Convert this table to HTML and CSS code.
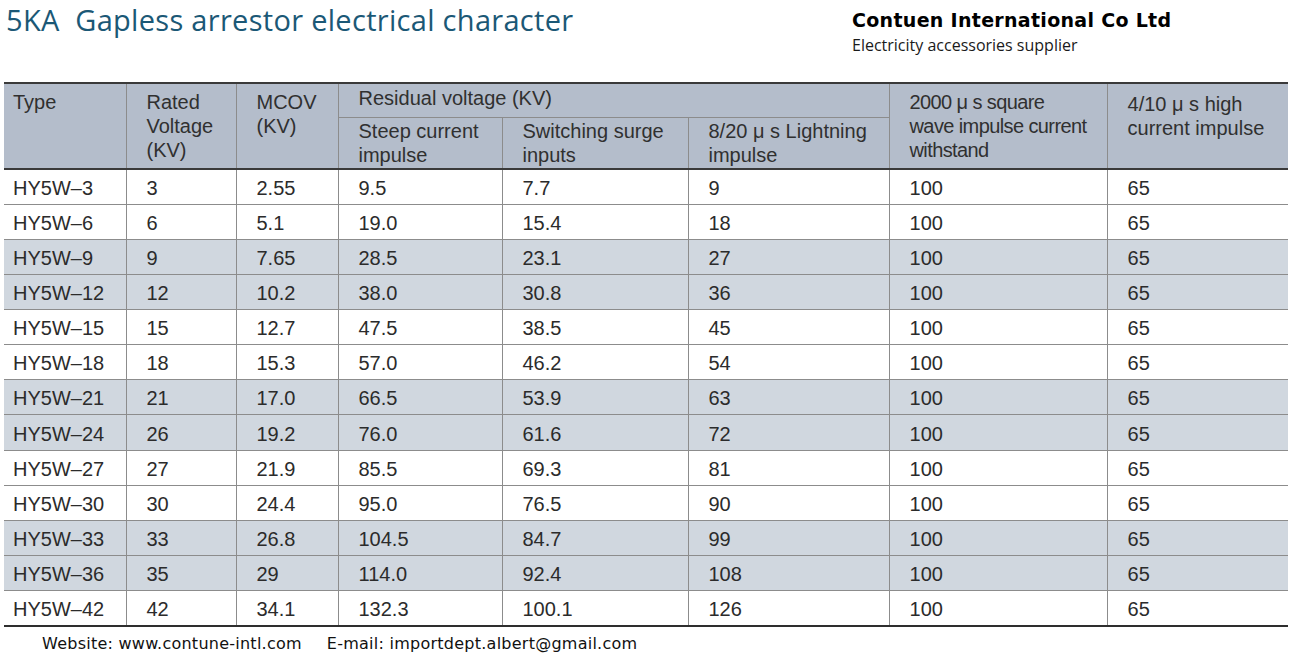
FILE: index.html
```html
<!DOCTYPE html>
<html lang="en">
<head>
<meta charset="utf-8">
<title>5KA Gapless arrestor electrical character</title>
<link rel="stylesheet" href="styles.css">
</head>
<body>
<div class="page">
  <header class="top">
    <h1 class="title">5KA&nbsp; Gapless arrestor electrical character</h1>
    <div class="company">
      <div class="company-name">Contuen International Co Ltd</div>
      <div class="company-tag">Electricity accessories supplier</div>
    </div>
  </header>

  <table class="spec">
    <colgroup>
      <col class="c1"><col class="c2"><col class="c3"><col class="c4">
      <col class="c5"><col class="c6"><col class="c7"><col class="c8">
    </colgroup>
    <thead>
      <tr class="h1">
        <th rowspan="2" class="first hl">Type</th>
        <th rowspan="2" class="hl">Rated<br>Voltage<br>(KV)</th>
        <th rowspan="2" class="hl">MCOV<br>(KV)</th>
        <th colspan="3" class="group">Residual voltage (KV)</th>
        <th rowspan="2" class="hl tight">2000 μ s square<br>wave impulse current<br>withstand</th>
        <th rowspan="2" class="last hl hl2">4/10 μ s high<br>current impulse</th>
      </tr>
      <tr class="h2">
        <th class="sub">Steep current<br>impulse</th>
        <th class="sub">Switching surge<br>inputs</th>
        <th class="sub">8/20 μ s Lightning<br>impulse</th>
      </tr>
    </thead>
    <tbody>
      <tr><td class="first">HY5W–3</td><td>3</td><td>2.55</td><td>9.5</td><td>7.7</td><td>9</td><td>100</td><td class="last">65</td></tr>
      <tr><td class="first">HY5W–6</td><td>6</td><td>5.1</td><td>19.0</td><td>15.4</td><td>18</td><td>100</td><td class="last">65</td></tr>
      <tr class="shade"><td class="first">HY5W–9</td><td>9</td><td>7.65</td><td>28.5</td><td>23.1</td><td>27</td><td>100</td><td class="last">65</td></tr>
      <tr class="shade"><td class="first">HY5W–12</td><td>12</td><td>10.2</td><td>38.0</td><td>30.8</td><td>36</td><td>100</td><td class="last">65</td></tr>
      <tr><td class="first">HY5W–15</td><td>15</td><td>12.7</td><td>47.5</td><td>38.5</td><td>45</td><td>100</td><td class="last">65</td></tr>
      <tr><td class="first">HY5W–18</td><td>18</td><td>15.3</td><td>57.0</td><td>46.2</td><td>54</td><td>100</td><td class="last">65</td></tr>
      <tr class="shade"><td class="first">HY5W–21</td><td>21</td><td>17.0</td><td>66.5</td><td>53.9</td><td>63</td><td>100</td><td class="last">65</td></tr>
      <tr class="shade"><td class="first">HY5W–24</td><td>26</td><td>19.2</td><td>76.0</td><td>61.6</td><td>72</td><td>100</td><td class="last">65</td></tr>
      <tr><td class="first">HY5W–27</td><td>27</td><td>21.9</td><td>85.5</td><td>69.3</td><td>81</td><td>100</td><td class="last">65</td></tr>
      <tr><td class="first">HY5W–30</td><td>30</td><td>24.4</td><td>95.0</td><td>76.5</td><td>90</td><td>100</td><td class="last">65</td></tr>
      <tr class="shade"><td class="first">HY5W–33</td><td>33</td><td>26.8</td><td>104.5</td><td>84.7</td><td>99</td><td>100</td><td class="last">65</td></tr>
      <tr class="shade"><td class="first">HY5W–36</td><td>35</td><td>29</td><td>114.0</td><td>92.4</td><td>108</td><td>100</td><td class="last">65</td></tr>
      <tr class="end"><td class="first">HY5W–42</td><td>42</td><td>34.1</td><td>132.3</td><td>100.1</td><td>126</td><td>100</td><td class="last">65</td></tr>
    </tbody>
  </table>

  <footer class="contact">
    <span>Website: www.contune-intl.com</span>
    <span>E-mail: importdept.albert@gmail.com</span>
  </footer>
</div>
</body>
</html>
```

FILE: styles.css
```css
html, body {
  margin: 0;
  padding: 0;
  background: #ffffff;
}

.page {
  width: 1296px;
}

/* ---------- top heading ---------- */
.top {
  display: grid;
  grid-template-columns: 852px 1fr;
  height: 82px;
}

.title {
  margin: 2px 0 0 6px;
  font-family: "Open Sans", "Noto Sans", sans-serif;
  font-weight: 400;
  font-size: 29px;
  line-height: 36px;
  letter-spacing: 0.3px;
  color: #1b5876;
  white-space: nowrap;
}

.company-name {
  margin-top: 9px;
  font-family: "DejaVu Sans", "Liberation Sans", sans-serif;
  font-weight: 700;
  font-size: 19px;
  line-height: 22px;
  letter-spacing: 0.3px;
  color: #000000;
}

.company-tag {
  margin-top: 4px;
  font-family: "Open Sans", "Noto Sans", sans-serif;
  font-size: 16px;
  line-height: 20px;
  color: #1a1a1a;
}

/* ---------- table ---------- */
.spec {
  margin-left: 4px;
  width: 1284px;
  table-layout: fixed;
  border-collapse: collapse;
  font-family: "Liberation Sans", Arial, sans-serif;
  font-size: 20px;
  line-height: 24px;
  color: #2b2b2b;
}

.c1 { width: 122px; }
.c2 { width: 110px; }
.c3 { width: 102px; }
.c4 { width: 164px; }
.c5 { width: 186px; }
.c6 { width: 201px; }
.c7 { width: 218px; }
.c8 { width: 181px; }

.spec th,
.spec td {
  border-left: 1px solid #8c8c8c;
  border-right: 1px solid #8c8c8c;
  padding: 0 0 0 20px;
  text-align: left;
  white-space: nowrap;
}

.spec .first {
  border-left: none;
  padding-left: 9px;
}

.spec .last {
  border-right: none;
}

.spec thead {
  background: #b4bdcb;
}

.spec th {
  font-weight: 400;
  vertical-align: top;
  color: #303030;
}

.spec .h1 th {
  border-top: 2px solid #3a3a3a;
  height: 31px;
}

.spec .hl {
  padding-top: 6px;
  border-bottom: 2px solid #3a3a3a;
}

.spec .hl2 {
  padding-top: 8px;
}

.spec .tight {
  letter-spacing: -0.6px;
}

.spec .group {
  padding-top: 2px;
  border-bottom: 1px solid #8c8c8c;
}

.spec .h2 th {
  height: 49px;
}

.spec .sub {
  padding-top: 1px;
  border-bottom: 2px solid #3a3a3a;
}

.spec tbody tr {
  height: 35.15px;
}

.spec td {
  vertical-align: middle;
  border-bottom: 1px solid #8c8c8c;
  padding-top: 2px;
}

.spec tr.shade td {
  background: #d0d7df;
}

.spec tr.end td {
  border-bottom: 2px solid #2e2e2e;
}

/* ---------- footer ---------- */
.contact {
  display: flex;
  gap: 25px;
  margin: 7px 0 0 42px;
  font-family: "DejaVu Sans", Verdana, sans-serif;
  font-size: 16px;
  line-height: 20px;
  letter-spacing: 0.25px;
  color: #111111;
}
```
